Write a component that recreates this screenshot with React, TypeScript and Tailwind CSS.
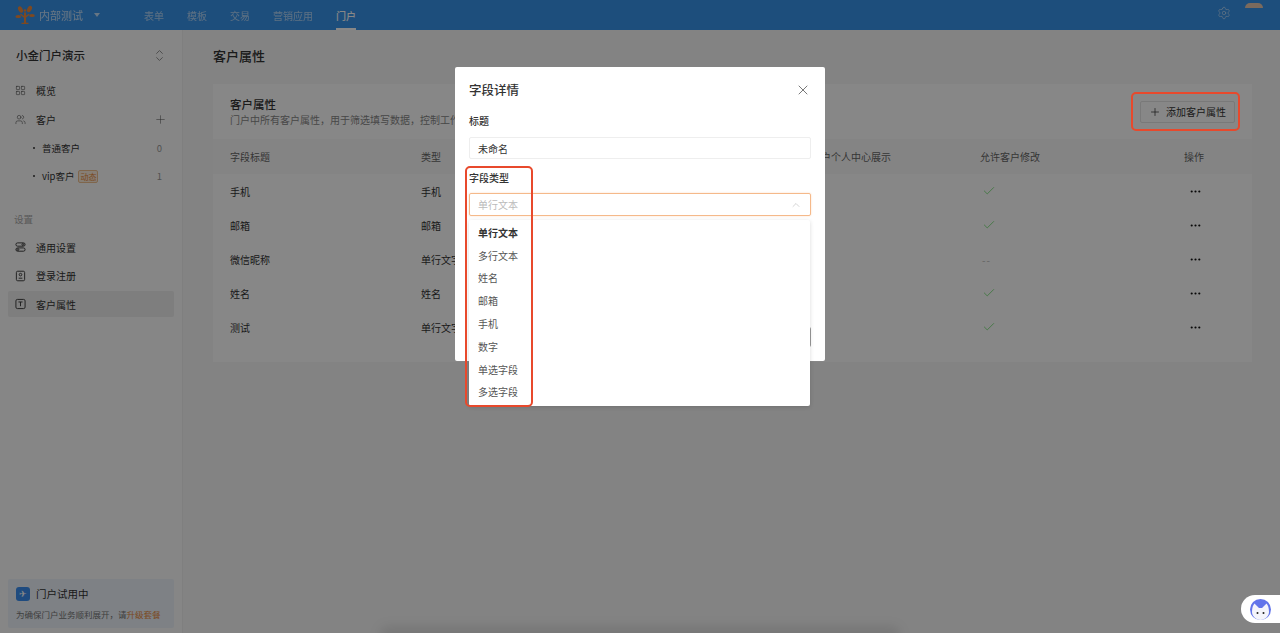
import { Check, ChevronUp, Ellipsis, LayoutGrid, Plus, Settings, Users, X } from "lucide-react";

const NAV = ["表单", "模板", "交易", "营销应用"];

const ROWS = [
  { title: "手机", type: "手机", editable: true },
  { title: "邮箱", type: "邮箱", editable: true },
  { title: "微信昵称", type: "单行文字", editable: false },
  { title: "姓名", type: "姓名", editable: true },
  { title: "测试", type: "单行文字", editable: true },
];

const OPTIONS = ["单行文本", "多行文本", "姓名", "邮箱", "手机", "数字", "单选字段", "多选字段"];

const COLS = "grid-cols-[191px_407px_169px_204px_68px]";

function Logo() {
  return (
    <svg width="20" height="22" viewBox="0 0 20 22" fill="#f08a3c">
      <path d="M6.500 20h7v-1.300h-2.400V13.500l3.400-2.800-.8-1-2.600 2V8.500H9V12L5.800 9.700l-.8 1L9 13.800v4.900H6.500z" />
      <ellipse cx="5.500" cy="5.500" rx="2.100" ry="3.500" transform="rotate(-28 5.500 5.500)" />
      <ellipse cx="14.500" cy="5" rx="2.100" ry="3.500" transform="rotate(28 14.500 5)" />
      <ellipse cx="3.200" cy="12.500" rx="2.800" ry="1.500" />
      <ellipse cx="17" cy="11.500" rx="2.800" ry="1.500" />
      <circle cx="10" cy="6.500" r="1.300" />
    </svg>
  );
}

function UpDown() {
  return (
    <svg width="9" height="13" viewBox="0 0 10 14" fill="none" stroke="#888" strokeWidth="1">
      <path d="M1.500 5 5 1.500 8.500 5M1.500 9 5 12.500 8.500 9" />
    </svg>
  );
}

function SwitchIcon() {
  return (
    <svg width="12" height="12" viewBox="0 0 12 12" fill="none" stroke="#333" strokeWidth="1">
      <rect x="1" y="1.500" width="10" height="3.600" rx="1.800" />
      <rect x="1" y="7" width="10" height="3.600" rx="1.800" />
      <circle cx="8.600" cy="3.300" r="1" />
      <circle cx="3.200" cy="8.800" r="1" />
    </svg>
  );
}

function LoginIcon() {
  return (
    <svg width="12" height="12" viewBox="0 0 12 12" fill="none" stroke="#333" strokeWidth="1">
      <rect x="1.500" y="0.800" width="9" height="10.400" rx="1.400" />
      <circle cx="6" cy="4.500" r="1.400" />
      <path d="M4 8.400h4" />
    </svg>
  );
}

function TextIcon() {
  return (
    <svg width="12" height="12" viewBox="0 0 12 12" fill="none" stroke="#333" strokeWidth="1">
      <rect x="1" y="1" width="10" height="10" rx="1.600" />
      <path d="M3.800 3.800h4.400M6 3.800v4.600" />
    </svg>
  );
}

function MenuItem({ icon, label, active }: { icon: React.ReactNode; label: string; active?: boolean }) {
  return (
    <div className={`flex h-[26px] items-center gap-[10px] rounded-[2px] px-[7px] text-[10px] text-[#333] ${active ? "bg-[#eeeeee]" : ""}`}>
      <span className="flex w-[11px] justify-center">{icon}</span>
      {label}
    </div>
  );
}

export default function App() {
  return (
    <div
      className="relative h-[633px] w-[1280px] overflow-hidden bg-[#f7f7f7] text-[#333]"
      style={{ fontFamily: '"Noto Sans CJK SC", "Liberation Sans", sans-serif' }}
    >
      <header className="flex h-[30px] items-center bg-[#3893ea] pl-[15px] text-white">
        <Logo />
        <span className="ml-[4px] text-[11px] opacity-70">内部测试</span>
        <span className="ml-[11px] h-0 w-0 border-x-[3px] border-t-[4px] border-x-transparent border-t-white/70" />
        <nav className="ml-[44px] flex h-full gap-[23px] text-[10px]">
          {NAV.map((n) => (
            <span key={n} className="flex items-center opacity-60">{n}</span>
          ))}
          <span className="flex items-center border-b-2 border-white pt-[2px] font-medium">门户</span>
        </nav>
        <div className="ml-auto flex items-start self-stretch">
          <Settings size={14} strokeWidth={1} className="mt-[6px] opacity-80" />
          <span className="mt-[3px] mr-[17px] ml-[14px] h-[5px] w-[18px] rounded-t-full bg-[#e8c9b0]" />
        </div>
      </header>

      <div className="flex h-[603px]">
        <aside className="flex w-[183px] flex-col border-r border-[#f0f0f0] bg-[#fdfdfd] px-[8px]">
          <div className="mt-[17px] flex items-center justify-between pr-[10px] pl-[8px]">
            <span className="text-[11.5px] font-medium">小金门户演示</span>
            <UpDown />
          </div>
          <div className="mt-[13px] flex flex-col gap-[3px]">
            <MenuItem icon={<LayoutGrid size={13} strokeWidth={1.1} color="#333" />} label="概览" />
            <div className="flex h-[26px] items-center justify-between pr-[7px]">
              <MenuItem icon={<Users size={13} strokeWidth={1.1} color="#333" />} label="客户" />
              <Plus size={13} strokeWidth={1} color="#555" />
            </div>
          </div>
          <div className="mt-[2px] flex h-[28px] items-center justify-between pr-[12px] pl-[25px] text-[9.5px]">
            <span className="flex items-center gap-[7px]">
              <span className="h-[2px] w-[2px] rounded-full bg-[#333]" />
              普通客户
            </span>
            <span className="text-[#999]">0</span>
          </div>
          <div className="flex h-[28px] items-center justify-between pr-[12px] pl-[25px] text-[9.5px]">
            <span className="flex items-center gap-[7px]">
              <span className="h-[2px] w-[2px] rounded-full bg-[#333]" />
              vip客户
              <span className="-ml-[3px] rounded-[2px] border border-[#f0c090] bg-[#fdeedd] px-[1px] text-[8px] leading-[11px] text-[#e8893c]">动态</span>
            </span>
            <span className="text-[#999]">1</span>
          </div>
          <div className="mt-[22px] pl-[6px] text-[9.5px] leading-[14px] text-[#aaa]">设置</div>
          <div className="mt-[8px] flex flex-col gap-[2.5px]">
            <MenuItem icon={<SwitchIcon />} label="通用设置" />
            <MenuItem icon={<LoginIcon />} label="登录注册" />
            <MenuItem icon={<TextIcon />} label="客户属性" active />
          </div>
          <div className="mt-auto mb-[5px] h-[49px] rounded-[2px] bg-[#eef4fb] px-[8px] pt-[7px]">
            <div className="flex items-center gap-[6px] text-[10.5px]">
              <span className="flex h-[14px] w-[14px] items-center justify-center rounded-[3px] bg-[#3b8ef0] text-[9px] leading-none text-white">✈</span>
              门户试用中
            </div>
            <div className="mt-[6px] text-[8.5px] whitespace-nowrap text-[#777]">
              为确保门户业务顺利展开，请<span className="text-[#e8893c]">升级套餐</span>
            </div>
          </div>
        </aside>

        <main className="flex-1 pt-[16px] pl-[30px]">
          <h1 className="text-[13px] leading-[20px] font-medium">客户属性</h1>
          <section className="mt-[18px] h-[278px] w-[1039px] bg-white">
            <div className="flex h-[55px] items-center justify-between px-[17px]">
              <div>
                <div className="text-[11.5px] leading-[15px] font-medium">客户属性</div>
                <div className="w-[225px] overflow-hidden text-[10px] leading-[15px] whitespace-nowrap text-[#888]">门户中所有客户属性，用于筛选填写数据，控制工作</div>
              </div>
              <button className="flex h-[22px] w-[95px] items-center justify-center gap-[5px] rounded-[2px] border border-[#e5e5e5] text-[10px]">
                <Plus size={12} strokeWidth={1.5} />
                添加客户属性
              </button>
            </div>
            <div className={`grid h-[35px] ${COLS} items-center bg-[#fafafa] text-[10px] text-[#666]`}>
              <span className="pl-[17px]">字段标题</span>
              <span className="pl-[17px]">类型</span>
              <span>客户个人中心展示</span>
              <span>允许客户修改</span>
              <span>操作</span>
            </div>
            {ROWS.map((r) => (
              <div key={r.title} className={`grid h-[34px] ${COLS} items-center text-[10px]`}>
                <span className="pl-[17px]">{r.title}</span>
                <span className="pl-[17px]">{r.type}</span>
                <span />
                <span className="pl-[2px]">
                  {r.editable ? (
                    <Check size={14} strokeWidth={1.3} color="#66dd66" />
                  ) : (
                    <span className="tracking-[1px] text-[#bbb]">--</span>
                  )}
                </span>
                <span className="pl-[5px]">
                  <Ellipsis size={13} strokeWidth={2} color="#111" />
                </span>
              </div>
            ))}
          </section>
        </main>
      </div>

      <div className="absolute bottom-[-10px] left-[380px] h-[16px] w-[520px] rounded-full bg-black/10 blur-[6px]" />
      <div className="absolute inset-0 bg-black/[0.47]" />

      <div className="absolute top-[67px] left-[455px] h-[294px] w-[370px] rounded-[2px] bg-white px-[14px]">
        <div className="flex h-[46px] items-center justify-between">
          <span className="text-[12.5px] font-medium">字段详情</span>
          <X size={16} strokeWidth={1} />
        </div>
        <div className="mt-[1px] text-[10px] leading-[14px] font-medium">标题</div>
        <div className="mt-[9px] flex h-[22px] w-[342px] items-center rounded-[2px] border border-[#eeeeee] pl-[8px] text-[10px]">未命名</div>
        <div className="mt-[12px] text-[10px] leading-[14px] font-medium">字段类型</div>
        <div className="mt-[8px] flex h-[23px] w-[342px] items-center justify-between rounded-[2px] border border-[#f5b98a] px-[8px] text-[10px] text-[#bbb] shadow-[0_0_2px_#fbd9bd]">
          单行文本
          <ChevronUp size={12} strokeWidth={1} color="#aaa" />
        </div>
        <div className="absolute top-[260px] left-[341px] h-[20px] w-[15px] rounded-r-[2px] border-r border-[#999]" />
      </div>

      <div className="absolute top-[220px] left-[469px] h-[186px] w-[341px] rounded-[2px] bg-white py-[1px] pl-[9px] shadow-[0_1px_4px_rgba(0,0,0,0.15)]">
        {OPTIONS.map((o, i) => (
          <div key={o} className={`flex h-[22.8px] items-center text-[10px] ${i === 0 ? "font-bold text-[#333]" : "text-[#555]"}`}>
            {o}
          </div>
        ))}
      </div>

      <div className="absolute top-[166px] left-[465px] h-[241px] w-[68px] rounded-[5px] border-[2.5px] border-[#e8492c]" />
      <div className="absolute top-[92px] left-[1131px] h-[39px] w-[109px] rounded-[5px] border-[2.5px] border-[#e8492c]" />

      <div className="absolute top-[595px] right-0 flex h-[28px] w-[39px] items-center rounded-l-full bg-white pl-[9px]">
        <svg width="21" height="21" viewBox="0 0 21 21">
          <circle cx="10.500" cy="10.500" r="10.500" fill="#6274ea" />
          <path d="M2 13c0-4 1-7 2.500-8.500L9 9h3l4.500-4.500C18 6 19 9 19 13c0 4-4 8-8.500 8S2 17 2 13z" fill="#f4f4fb" />
          <circle cx="7.500" cy="14" r="1" fill="#222" />
          <circle cx="13.500" cy="14" r="1" fill="#222" />
        </svg>
      </div>
    </div>
  );
}
